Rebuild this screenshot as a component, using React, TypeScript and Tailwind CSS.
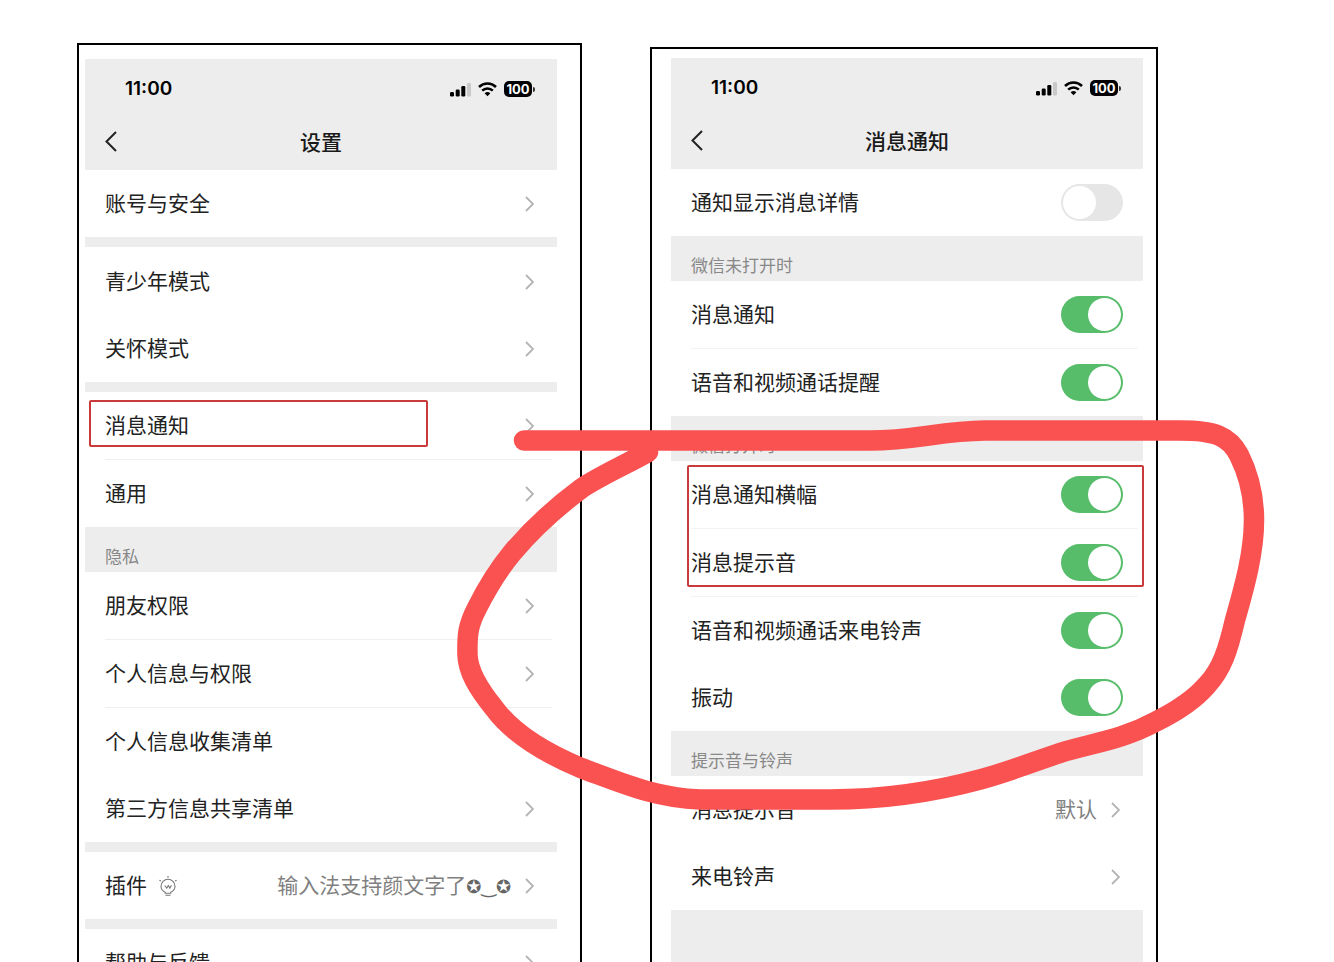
import { ReactNode } from "react";

// Propiedades de una fila de ajustes
interface FilaProps {
    titulo: string;
    icono?: ReactNode;
    detalle?: ReactNode;
    flecha?: boolean;
    borde?: boolean;
}

// Propiedades de una fila con interruptor
interface InterruptorProps {
    id: string;
    titulo: string;
    activo?: boolean;
    borde?: boolean;
}

// Flecha gris al final de cada fila
const Flecha = () => (
    <svg className="h-4 w-[9px] shrink-0" viewBox="0 0 9 16" fill="none" stroke="#b4b4b4" strokeWidth="1.8" aria-hidden="true">
        <path d="M1 1l7 7-7 7" />
    </svg>
);

// Bombilla que acompaña a los complementos
const Bombilla = () => (
    <svg className="h-5 w-[18px]" viewBox="0 0 18 20" fill="none" stroke="#777" strokeWidth="1.1" aria-hidden="true">
        <path d="M6.2 16.200C3.800 15.200 2 13 2 10.300a7 7 0 0 1 14 0c0 2.700-1.800 4.900-4.200 5.900v1.100H6.200z" />
        <path d="M5.700 9.500l2.100 2.600 1.500-2.600 1.600 2.600 1.500-2.900M6.400 19.200h5.200M9 0v1.700M.4 4.200l1.500.8M17.600 4.200l-1.500.8" />
    </svg>
);

// Barra de estado del telefono
const BarraEstado = () => (
    <div className="flex h-[60px] items-center justify-between pr-[22px] pl-10">
        <span className="font-[Inter] text-[19px] leading-6 font-semibold text-black">11:00</span>
        <div className="flex items-center gap-[7px]">
            <svg className="h-[15px] w-[21px]" viewBox="0 0 21 15" aria-hidden="true">
                <rect x="0" y="10" width="4" height="4.500" rx="1.300" />
                <rect x="5.700" y="7.500" width="4" height="7" rx="1.300" />
                <rect x="11.300" y="4" width="4" height="10.500" rx="1.300" />
                <rect x="17" y="1" width="4" height="13.500" rx="1.300" fill="#c9c9c9" />
            </svg>
            <svg className="h-[15px] w-[19px]" viewBox="0 0 19 15" fill="none" stroke="#000" strokeWidth="2.600" aria-hidden="true">
                <path d="M1 5a12.200 12.200 0 0 1 17 0M4.200 8.600a7.600 7.600 0 0 1 10.600 0" />
                <path d="M9.500 14.300l-2.900-3a4.200 4.200 0 0 1 5.800 0z" fill="#000" stroke="none" />
            </svg>
            <div className="flex items-center gap-px">
                <span className="flex h-4 w-7 items-center justify-center rounded-[5px] bg-black font-[Inter] text-[13px] leading-4 font-bold text-white">100</span>
                <span className="h-[5px] w-0.5 rounded-r-full bg-[#333]" />
            </div>
        </div>
    </div>
);

// Cabecera con la barra de estado y el titulo
const Cabecera = ({ titulo }: { titulo: string }) => (
    <header className="h-[111px] bg-[#ededed]">
        <BarraEstado />
        <div className="grid h-12 grid-cols-[1fr_auto_1fr] items-center px-5">
            <button type="button" aria-label="返回" className="flex h-6 w-3 items-start">
                <svg className="h-[21px] w-3" viewBox="0 0 12 21" fill="none" stroke="#222" strokeWidth="2" aria-hidden="true">
                    <path d="M11 1L1.500 10.500 11 20" />
                </svg>
            </button>
            <h1 className="text-[21px] leading-7 font-medium text-[#1a1a1a]">{titulo}</h1>
        </div>
    </header>
);

// Fila de ajustes con flecha
const Fila = ({ titulo, icono, detalle, flecha = true, borde }: FilaProps) => (
    <a href="#" className={`mr-[5px] ml-5 flex items-center pr-[18px] ${borde ? "h-[68px] border-b border-[#efefef]" : "h-[67px]"}`}>
        <span className="text-[21px] leading-7 text-[#222]">{titulo}</span>
        {icono && <span className="ml-3">{icono}</span>}
        <span className="ml-auto flex items-center gap-[14px] text-[21px] leading-7 text-[#808080]">
            {detalle}
            {flecha && <Flecha />}
        </span>
    </a>
);

// Fila con interruptor
const Interruptor = ({ id, titulo, activo = false, borde }: InterruptorProps) => (
    <div className={`mr-[5px] ml-5 flex items-center justify-between pr-[15px] ${borde ? "h-[68px] border-b border-[#f3f3f3]" : "h-[67px]"}`}>
        <label htmlFor={id} className="text-[21px] leading-7 text-[#222]">{titulo}</label>
        <input
            id={id}
            type="checkbox"
            role="switch"
            defaultChecked={activo}
            className="flex h-[37px] w-[62px] shrink-0 appearance-none items-center rounded-full bg-[#e6e6e6] px-0.5 before:size-[33px] before:rounded-full before:bg-white before:content-[''] checked:justify-end checked:bg-[#57bd6a]"
        />
    </div>
);

// Encabezado gris de una seccion
const Seccion = ({ titulo }: { titulo: string }) => (
    <h2 className="flex h-[45px] items-end bg-[#ededed] px-5 pb-[3px] text-[17px] leading-6 text-[#888]">{titulo}</h2>
);

// Franja gris entre grupos
const Separador = () => <div className="h-[10px] bg-[#ededed]" />;

// Pantalla de ajustes
const Ajustes = () => (
    <section className="mt-[43px] border-2 border-b-0 border-black pt-[14px] pr-[23px] pl-[6px]">
        <Cabecera titulo="设置" />
        <Fila titulo="账号与安全" />
        <Separador />
        <div className="pt-px">
            <Fila titulo="青少年模式" />
            <Fila titulo="关怀模式" />
        </div>
        <Separador />
        <div className="relative">
            <Fila titulo="消息通知" borde />
            <div className="pointer-events-none absolute top-2 left-1 h-[47px] w-[339px] rounded-xs border-2 border-[#cb3a3a]" />
        </div>
        <Fila titulo="通用" />
        <Seccion titulo="隐私" />
        <Fila titulo="朋友权限" borde />
        <Fila titulo="个人信息与权限" borde />
        <Fila titulo="个人信息收集清单" flecha={false} />
        <Fila titulo="第三方信息共享清单" />
        <Separador />
        <Fila
            titulo="插件"
            icono={<Bombilla />}
            detalle={
                <span>
                    输入法支持颜文字了
                    <span className="font-['DejaVu_Sans'] text-lg leading-none text-[#666]">✪‿✪</span>
                </span>
            }
        />
        <Separador />
        <Fila titulo="帮助与反馈" />
    </section>
);

// Pantalla de notificaciones
const Notificaciones = () => (
    <section className="mt-[47px] flex flex-col border-2 border-b-0 border-black pt-[9px] pr-[13px] pl-[19px]">
        <Cabecera titulo="消息通知" />
        <Interruptor id="detalles" titulo="通知显示消息详情" />
        <Seccion titulo="微信未打开时" />
        <Interruptor id="mensajes" titulo="消息通知" activo borde />
        <Interruptor id="llamadas" titulo="语音和视频通话提醒" activo />
        <Seccion titulo="微信打开时" />
        <div className="relative">
            <Interruptor id="banner" titulo="消息通知横幅" activo borde />
            <Interruptor id="sonido" titulo="消息提示音" activo borde />
            <div className="pointer-events-none absolute top-1 -right-px left-4 h-[122px] rounded-xs border-2 border-[#cb3a3a]" />
        </div>
        <Interruptor id="tono" titulo="语音和视频通话来电铃声" activo />
        <Interruptor id="vibrar" titulo="振动" activo />
        <Seccion titulo="提示音与铃声" />
        <Fila titulo="消息提示音" detalle="默认" />
        <Fila titulo="来电铃声" />
        <div className="grow bg-[#ededed]" />
    </section>
);

// Trazo rojo dibujado a mano sobre las dos pantallas
const Trazo = () => (
    <svg className="pointer-events-none absolute top-0 left-0 w-full" viewBox="0 0 1334 962" fill="none" stroke="#fa5151" strokeWidth="20.500" strokeLinecap="round" strokeLinejoin="round" aria-hidden="true">
        <path d="M524 440.500H870C915 440.500 940 431 985 430.500H1180C1215 430.500 1229 436 1239 455C1249 475 1254 495 1254 520C1254 552 1245 585 1235 620C1228 650 1222 669 1207 685C1195 699 1177 711 1157 721C1122 740 1092 743 1060 753C1033 762 1008 772 980 779.500C930 793 880 799.500 830 799.500H700C655 798 622 783 581 768C545 753 513 734 494 708C477 687 468 671 467.500 655C467 635 468 625 477 608C487 588 498 570 512 553C533 528 555 508 582 488C602 475 625 465 648 452" />
    </svg>
);

const App = () => {
    return (
        <main className="relative grid h-screen grid-cols-[505fr_508fr] gap-[68px] overflow-hidden bg-white pr-44 pl-[77px] font-['Inter','Noto_Sans_CJK_SC',sans-serif]" lang="zh-CN">
            <Ajustes />
            <Notificaciones />
            <Trazo />
        </main>
    );
};

// Exportar por defecto el componente
export default App;
